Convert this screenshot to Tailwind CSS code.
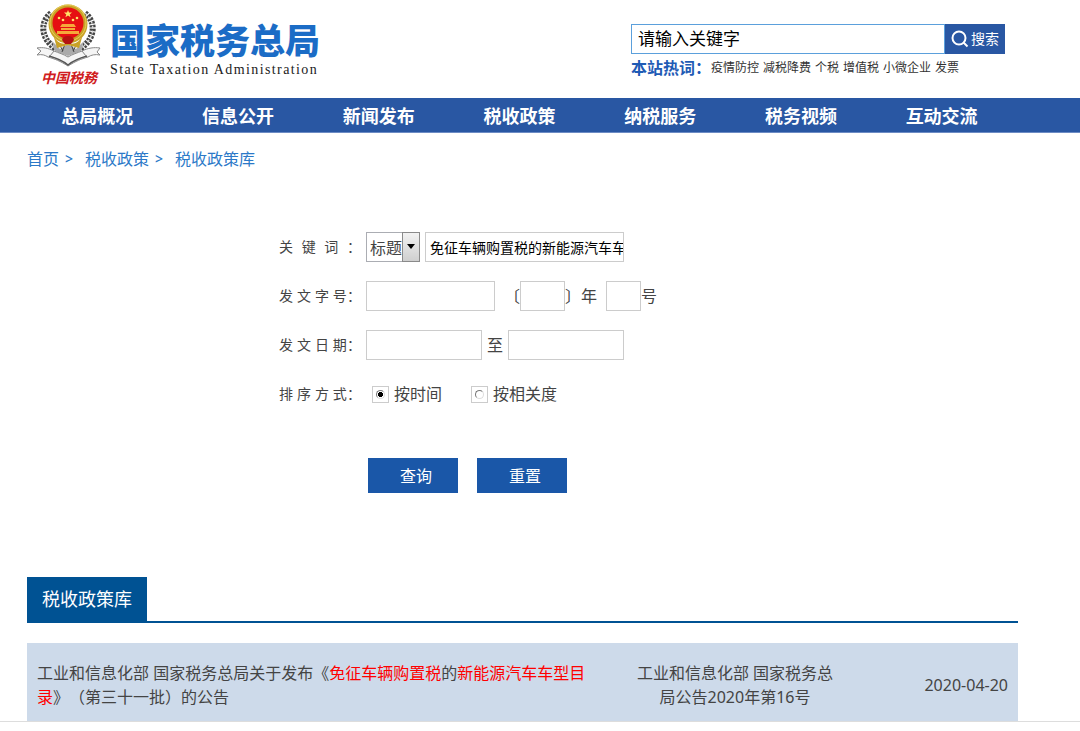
<!DOCTYPE html>
<html lang="zh-CN">
<head>
    <meta charset="UTF-8">
    <meta name="viewport" content="width=device-width, initial-scale=1.0">
    <title>税收政策库 - 国家税务总局</title>
    <script src="https://cdn.jsdelivr.net/npm/@tailwindcss/browser@4"></script>
</head>
<body class="bg-white font-['Noto_Sans','Noto_Sans_CJK_SC',sans-serif] text-base leading-6 text-[#444] [text-spacing-trim:space-all]">
    <header class="flex h-[98px] items-start justify-between pl-9 pr-[75px]">
        <a href="#" class="flex">
            <div class="flex w-[66px] flex-col items-center pt-1">
                <svg class="h-[63px] w-[66px]" viewBox="0 0 66 63" fill="none" aria-hidden="true">
                    <!-- wheat ears -->
                    <g stroke="#444" stroke-width="6" stroke-dasharray="2.4 1.2">
                        <path d="M15 9C4 18 4 34 20 45"/>
                        <path d="M49 9C60 18 60 34 44 45"/>
                    </g>
                    <g stroke="#d8d8d8" stroke-width="1.4" stroke-dasharray="3 2">
                        <path d="M15 9C4 18 4 34 20 45"/>
                        <path d="M49 9C60 18 60 34 44 45"/>
                    </g>
                    <path d="M16 37l8 8 8-5 8 5 8-8-3 10-13 5-13-5z" fill="#aaa"/>
                    <path d="M22 38l5 9M42 38l-5 9M29 40l-3 8M35 40l3 8" stroke="#444"/>
                    <!-- ribbon -->
                    <path d="M1 44c6-1 11 0 17 3 5 2 9 3 14 6 5-3 9-4 14-6 6-3 12-4 18-3l-3 4 3 3c-5-1-9 0-12 2-7 2-12 4-20 9-8-5-13-7-20-9-3-2-6-3-11-2l4-4z" fill="#f5f5f5" stroke="#888"/>
                    <path d="M13 52c7 2 13 4 19 9 6-5 12-7 19-9" stroke="#555" stroke-width="1.5"/>
                    <path d="M18 47l-4 5M46 47l4 5" stroke="#888"/>
                    <!-- national emblem -->
                    <circle cx="32" cy="20" r="19.5" fill="#c9a227"/>
                    <path d="M17 30c3 9 10 11 15 9 5 2 12 0 15-9l-4 14-11-3-11 3z" fill="#c9a227"/>
                    <circle cx="32" cy="19" r="18" stroke="#e8cf58"/>
                    <circle cx="32" cy="19" r="15.5" fill="#e60f12"/>
                    <path d="M32 6l1 2.6h3l-2.3 1.8.9 2.8-2.6-1.7-2.6 1.7.9-2.8L28 8.600h3z" fill="#ffe36a"/>
                    <g fill="#ffe36a">
                        <circle cx="23" cy="14" r="1.300"/><circle cx="27" cy="16" r="1.300"/>
                        <circle cx="37" cy="16" r="1.300"/><circle cx="41" cy="14" r="1.300"/>
                    </g>
                    <path d="M26 20h12l2 3H24zM25 24h14v2H25zM21 27h22v3H21z" fill="#f6a83a"/>
                    <path d="M26 36a6 4 0 0 1 12 0l-3 4h-6z" fill="#b31412"/>
                </svg>
                <span class="whitespace-nowrap font-['Noto_Sans_CJK_SC',sans-serif] text-sm leading-5 font-bold text-[#d01c22] italic">中国税務</span>
            </div>
            <div class="ml-2 pt-[18px]">
                <div class="whitespace-nowrap font-['Noto_Sans_CJK_SC',sans-serif] text-[35px] leading-[42px] font-black text-[#1b6cc6]">国家税务总局</div>
                <div class="whitespace-nowrap font-['Liberation_Serif',serif] text-sm leading-5 tracking-widest text-[#222]">State Taxation Administration</div>
            </div>
        </a>

        <div class="w-[374px] pt-6">
            <form class="flex h-[30px]">
                <input type="text" aria-label="关键字" value="请输入关键字" class="min-w-0 flex-1 border border-[#5ba0dc] px-1.5 text-[17px] text-black">
                <button type="button" class="flex w-[60px] items-center justify-center bg-[#2957a3] text-sm text-white">
                    <svg class="h-[18px] w-5" viewBox="0 0 20 18" fill="none" stroke="currentColor" stroke-width="2" aria-hidden="true">
                        <circle cx="8" cy="8" r="6.500"/>
                        <path d="M12.500 12.500l4 4"/>
                    </svg>
                    搜索
                </button>
            </form>
            <div class="flex items-center gap-1 pt-0.5 text-xs leading-6 whitespace-nowrap text-[#333]">
                <strong class="-mr-1 text-base leading-6 text-[#1f5bb5]">本站热词：</strong>
                <a href="#">疫情防控</a>
                <a href="#">减税降费</a>
                <a href="#">个税</a>
                <a href="#">增值税</a>
                <a href="#">小微企业</a>
                <a href="#">发票</a>
            </div>
        </div>
    </header>

    <nav class="border-b border-[#6d8cc4] bg-[#2957a3] pr-[68px] pl-[27px]">
        <div class="grid grid-cols-7 pt-1 pb-0.5 text-center text-lg leading-7 font-bold whitespace-nowrap text-white">
            <a href="#">总局概况</a>
            <a href="#">信息公开</a>
            <a href="#">新闻发布</a>
            <a href="#">税收政策</a>
            <a href="#">纳税服务</a>
            <a href="#">税务视频</a>
            <a href="#">互动交流</a>
        </div>
    </nav>

    <div class="flex pt-3.5 pl-[27px] text-[#2b79c8]">
        <a href="#">首页</a>
        <span class="w-[26px] pl-1.5 text-sm leading-6 font-medium">&gt;</span>
        <a href="#">税收政策</a>
        <span class="w-[26px] pl-1.5 text-sm leading-6 font-medium">&gt;</span>
        <a href="#">税收政策库</a>
    </div>

    <form class="flex flex-col gap-[19px] pt-[61px] pl-[279px]">
        <div class="flex h-[30px] items-center">
            <label for="keyword" class="mr-[5px] w-[82px] text-sm whitespace-nowrap [text-align-last:justify]">关 键 词 ：</label>
            <div class="relative mr-[5px]">
                <select aria-label="检索范围" class="block h-[30px] w-[54px] appearance-none border border-[#abadb3] bg-white pt-0.5 pl-[3px]">
                    <option>标题</option>
                    <option>正文</option>
                </select>
                <span class="pointer-events-none absolute inset-y-0 right-0 w-[18px] border border-[#8a8a8a] bg-linear-to-b from-[#f2f2f2] to-[#cfcfcf]">
                    <svg class="mx-auto mt-[11px] h-[5px] w-2" viewBox="0 0 8 5" aria-hidden="true"><path d="M0 0h8L4 5z"/></svg>
                </span>
            </div>
            <input id="keyword" type="text" value="免征车辆购置税的新能源汽车车型目录" class="h-[30px] w-[199px] border border-[#ccc] pl-1 text-sm text-black">
        </div>
        <div class="flex h-[30px] items-center">
            <label for="docword" class="mr-[5px] w-[82px] text-sm whitespace-nowrap [text-align-last:justify]">发 文 字 号：</label>
            <input id="docword" type="text" class="mr-[9px] h-[30px] w-[129px] border border-[#ccc]">
            <span>〔</span>
            <input type="text" aria-label="年份" class="h-[30px] w-[45px] border border-[#ccc]">
            <span class="mr-[9px]">〕年</span>
            <input type="text" aria-label="文号" class="h-[30px] w-[35px] border border-[#ccc]">
            <span>号</span>
        </div>
        <div class="flex h-[30px] items-center">
            <label for="datefrom" class="mr-[5px] w-[82px] text-sm whitespace-nowrap [text-align-last:justify]">发 文 日 期：</label>
            <input id="datefrom" type="text" class="h-[30px] w-[116px] border border-[#ccc]">
            <label for="dateto" class="px-[5px]">至</label>
            <input id="dateto" type="text" class="h-[30px] w-[116px] border border-[#ccc]">
        </div>
        <div class="flex h-[30px] items-center">
            <span class="mr-[11px] w-[82px] text-sm whitespace-nowrap [text-align-last:justify]">排 序 方 式：</span>
            <label class="mr-[29px] flex items-center gap-[5px]">
                <span class="flex size-[17px] items-center justify-center border border-[#ccc]">
                    <input type="radio" name="sort" checked class="size-[9px] appearance-none rounded-full border border-t-[#777] border-r-[#ddd] border-b-[#ddd] border-l-[#777] checked:bg-radial checked:from-black checked:from-45% checked:to-white checked:to-55%">
                </span>
                按时间
            </label>
            <label class="flex items-center gap-[5px]">
                <span class="flex size-[17px] items-center justify-center border border-[#ccc]">
                    <input type="radio" name="sort" class="size-[9px] appearance-none rounded-full border border-t-[#777] border-r-[#ddd] border-b-[#ddd] border-l-[#777] checked:bg-radial checked:from-black checked:from-45% checked:to-white checked:to-55%">
                </span>
                按相关度
            </label>
        </div>
        <div class="flex gap-[19px] pt-[30px] pl-[89px] text-white">
            <button type="button" class="h-[35px] w-[90px] bg-[#1a57a8] pl-1.5">查询</button>
            <button type="reset" class="h-[35px] w-[90px] bg-[#1a57a8] pl-1.5">重置</button>
        </div>
    </form>

    <section class="border-b border-[#ddd] pt-[84px] pr-[62px] pl-[27px]">
        <div class="flex border-b-2 border-[#005293]">
            <h2 class="bg-[#005293] px-[15px] py-2 text-lg leading-7 text-white">税收政策库</h2>
        </div>
        <table class="mt-5 w-full bg-[#cddaea]">
            <tbody>
                <tr>
                    <td class="w-[574px] pt-[18px] pr-3 pb-3 pl-2.5">
                        <a href="#">工业和信息化部 国家税务总局关于发布《<span class="text-[#f00]">免征车辆购置税</span>的<span class="text-[#f00]">新能源汽车车型目录</span>》（第三十一批）的公告</a>
                    </td>
                    <td class="w-[268px] px-[34px] pt-[18px] pb-3 text-center">工业和信息化部 国家税务总局公告2020年第16号</td>
                    <td class="pt-[18px] pr-2.5 pb-3 text-right whitespace-nowrap">2020-04-20</td>
                </tr>
            </tbody>
        </table>
    </section>
</body>
</html>
